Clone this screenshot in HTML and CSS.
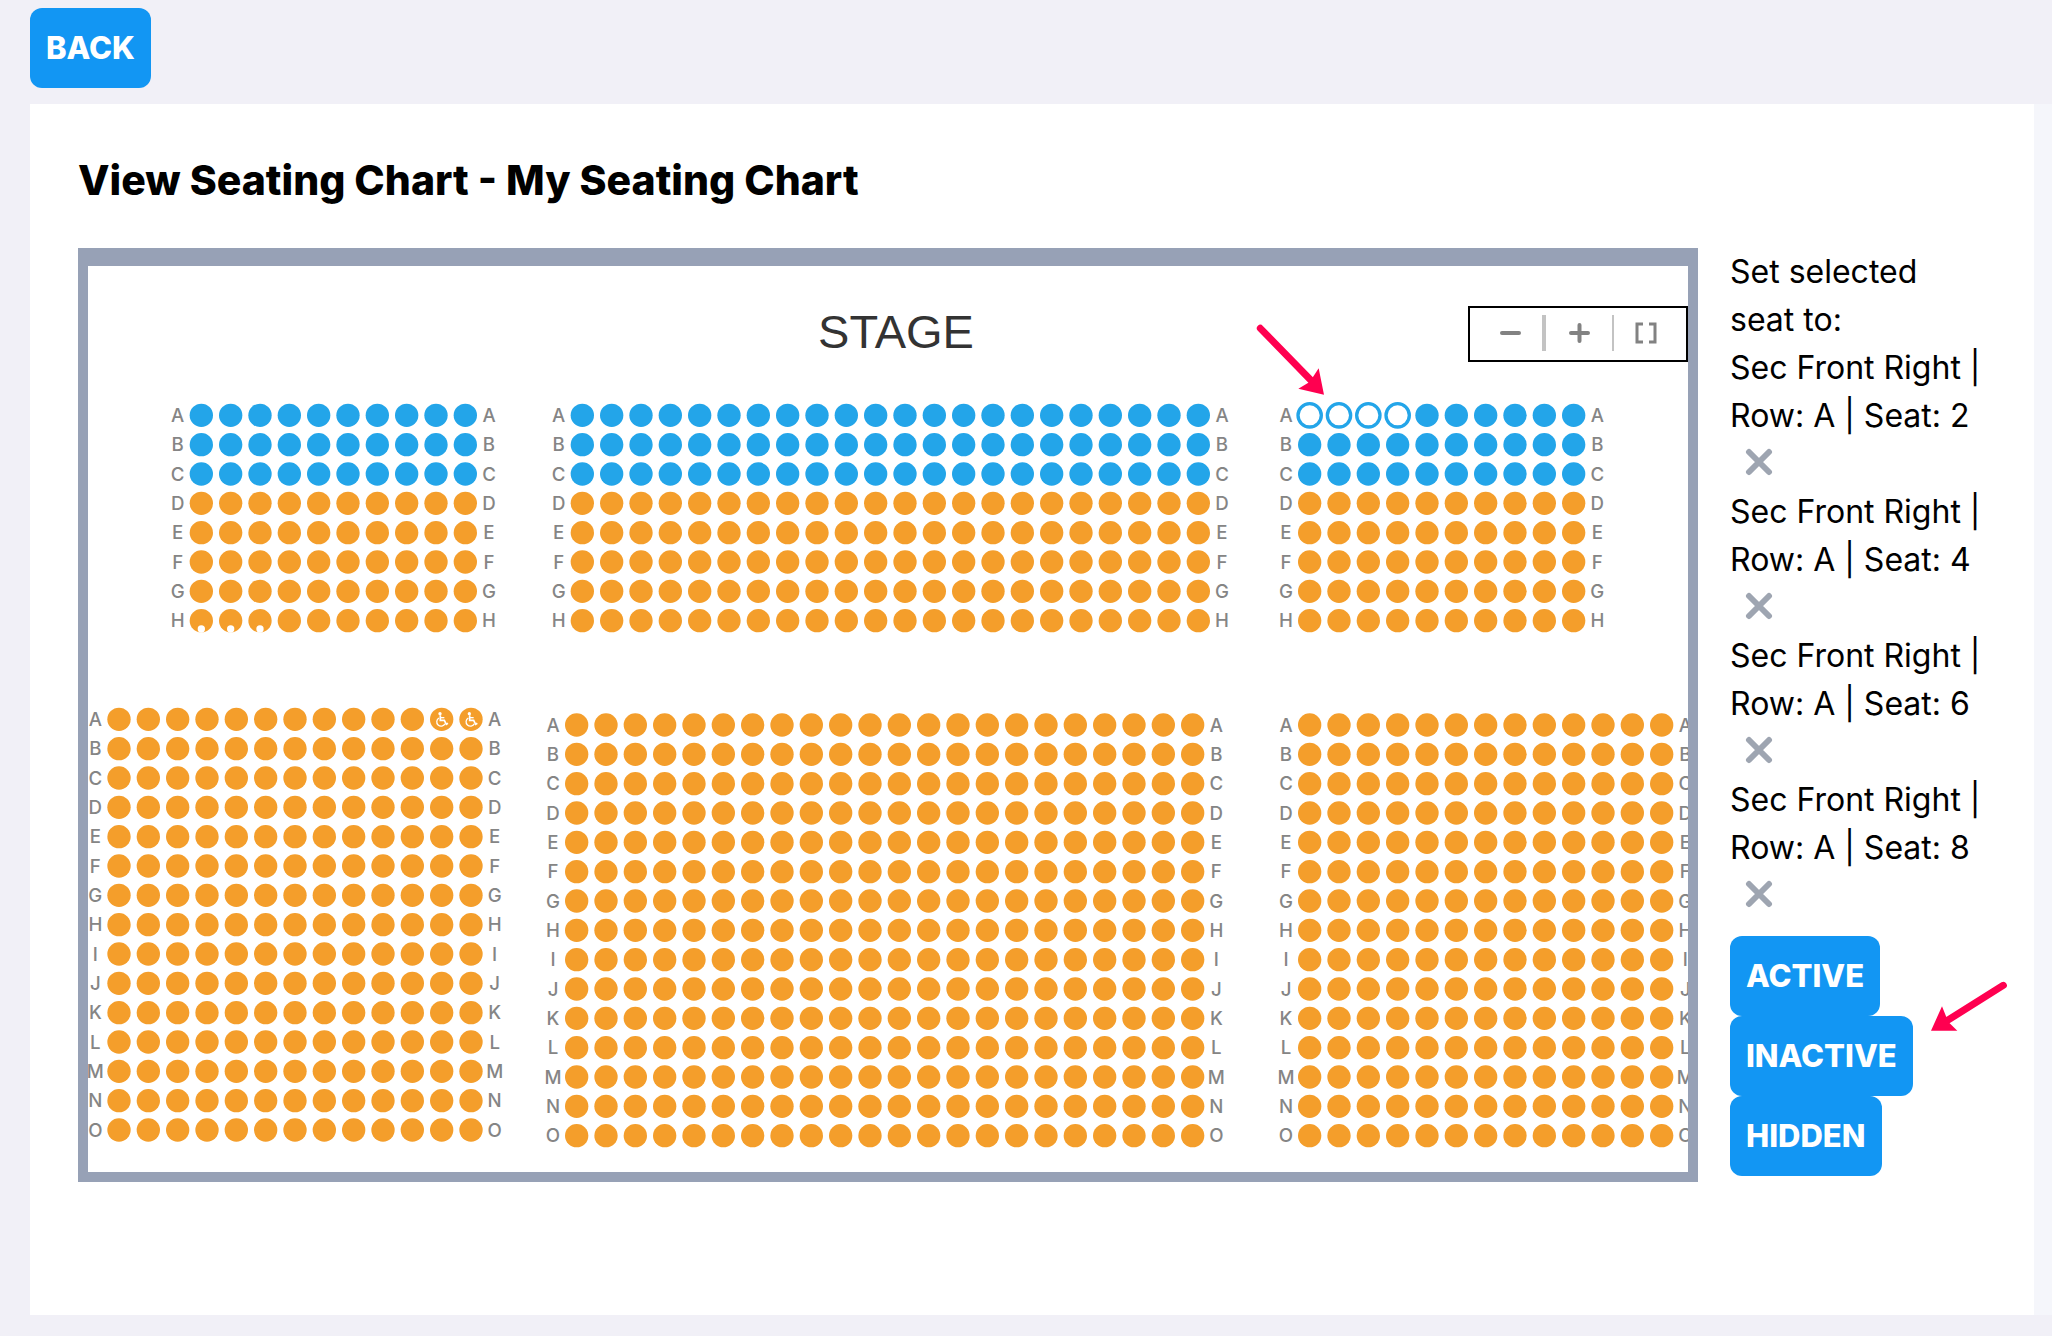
FILE: index.html
```html
<!DOCTYPE html>
<html lang="en">
<head>
	<meta charset="utf-8">
	<title>View Seating Chart</title>
	<link rel="stylesheet" href="styles.css">
</head>
<body>
	<header class="topbar">
		<button type="button" class="btn">BACK</button>
	</header>
	<main class="page">
		<div class="panel">
			<h1 class="title">View Seating Chart - My Seating Chart</h1>
			<div class="content">
				<div class="chart">
					<svg class="seatmap" id="seatmap" viewBox="0 0 4800 2718" role="img" aria-label="Seating chart">
						<defs>
							<g id="wheelchair" fill="none" stroke="#fff" stroke-width="5">
								<circle cx="-5" cy="-17" r="5" fill="#fff" stroke="none"/>
								<path d="M-4 -12V3H8L14 15L19 12"/>
								<path d="M-4 -5H8" stroke-width="4"/>
								<path d="M-8 -4A13 13 0 1 0 10 13" stroke-width="4"/>
							</g>
						</defs>
						<text class="stage" x="2424" y="247">STAGE</text>
						<g id="sections"></g>
						<g class="pointer" transform="translate(3456 72)">
							<path class="shaft" d="M61 115L212 270"/>
							<path d="M252 314L236 235L217 264L205 278L175 296Z"/>
						</g>
					</svg>
					<div class="tools">
						<button type="button" aria-label="Zoom out">
							<svg width="24" height="24" viewBox="0 0 24 24"><path d="M4 12H21"/></svg>
						</button>
						<span class="bar wide"></span>
						<button type="button" aria-label="Zoom in">
							<svg width="24" height="24" viewBox="0 0 24 24"><path d="M4 12H21M12.500 4V20"/></svg>
						</button>
						<span class="bar"></span>
						<button type="button" aria-label="Reset zoom">
							<svg width="24" height="24" viewBox="0 0 24 24"><path class="thin" d="M9 3H3V21H9M15 3H21V21H15"/></svg>
						</button>
					</div>
				</div>
				<aside class="side">
					<p>Set selected<br>seat to:</p>
					<ul class="picked">
						<li>Sec Front Right |<br>Row: A | Seat: 2
							<button type="button" class="remove" aria-label="Remove seat 2"><svg width="28" height="28" viewBox="0 0 28 28"><path d="M4 4L24 24M24 4L4 24"/></svg></button>
						</li>
						<li>Sec Front Right |<br>Row: A | Seat: 4
							<button type="button" class="remove" aria-label="Remove seat 4"><svg width="28" height="28" viewBox="0 0 28 28"><path d="M4 4L24 24M24 4L4 24"/></svg></button>
						</li>
						<li>Sec Front Right |<br>Row: A | Seat: 6
							<button type="button" class="remove" aria-label="Remove seat 6"><svg width="28" height="28" viewBox="0 0 28 28"><path d="M4 4L24 24M24 4L4 24"/></svg></button>
						</li>
						<li>Sec Front Right |<br>Row: A | Seat: 8
							<button type="button" class="remove" aria-label="Remove seat 8"><svg width="28" height="28" viewBox="0 0 28 28"><path d="M4 4L24 24M24 4L4 24"/></svg></button>
						</li>
					</ul>
					<div class="actions">
						<button type="button" class="btn">ACTIVE</button>
						<button type="button" class="btn">INACTIVE</button>
						<button type="button" class="btn">HIDDEN</button>
						<svg class="pointer note" width="76" height="50" viewBox="0 0 228 150">
							<path class="shaft" d="M217 13L50 118"/>
							<path d="M0 149L33 76L45 106L56 127L79 149Z"/>
						</svg>
					</div>
				</aside>
			</div>
		</div>
	</main>
	<script src="seats.js"></script>
</body>
</html>
```
FILE: styles.css
```css
*{box-sizing:border-box;}
body{margin:0;background:#f1f0f7;color:#000;font-family:Inter,"Open Sans",sans-serif;font-size:32px;line-height:48px;}
p,ul,h1{margin:0;padding:0;}
button{font-family:inherit;border:0;cursor:pointer;}
.topbar{padding:8px 30px 16px;line-height:0;}
.btn{
	height:80px;padding:0 16px;
	border-radius:12px;background:#1296f3;
	color:#fff;font-size:31px;font-weight:800;line-height:48px;
}
.page{margin:0 0 21px 30px;padding-right:18px;background:#f5f6fb;}
.panel{padding:48px 48px 133px;background:#fff;}
.title{margin-bottom:40px;font-size:41px;font-weight:800;line-height:56px;}
.content{display:flex;align-items:flex-start;gap:32px;}

/* chart */
.chart{position:relative;flex:1;min-width:0;border:10px solid #97a1b6;border-top-width:18px;}
.seatmap{display:block;width:100%;height:auto;}
.stage{font-family:"Liberation Sans",Arial,sans-serif;font-size:141px;fill:#333;text-anchor:middle;}
.label{font-size:56px;font-weight:500;fill:#858585;text-anchor:middle;}
.seat{fill:#f49e2b;}
.seat.blue{fill:#23a5e9;}
.seat.selected{fill:#fff;stroke:#23a5e9;stroke-width:10px;}
.pointer{fill:#ff0050;}
.pointer .shaft{fill:none;stroke:#ff0050;stroke-width:21px;stroke-linecap:round;}
.tools{
	position:absolute;top:40px;right:0;
	display:flex;align-items:center;
	width:220px;height:56px;padding:0 7px 2px;
	border:2px solid #000;background:#fff;
}
.tools button{display:flex;flex:1;justify-content:center;padding:0;background:none;}
.tools path{fill:none;stroke:#828282;stroke-width:4px;stroke-linecap:round;}
.tools .thin{stroke-width:3px;stroke-linecap:butt;}
.bar{width:2px;height:36px;background:#c3c3c3;}
.bar.wide{width:4px;}

/* selected seats */
.side{width:256px;white-space:nowrap;}
.picked{list-style:none;}
.remove{display:flex;align-items:center;height:48px;padding:0 0 4px 15px;background:none;}
.remove path{stroke:#9ea5b1;stroke-width:6px;stroke-linecap:round;}
.actions{position:relative;display:flex;flex-direction:column;align-items:flex-start;margin-top:16px;}
.note{position:absolute;top:45px;left:201px;}
```
FILE: seats.js
```js
// x, y is the centre of the first seat; seats are 88 units apart
var PITCH = 88;
var sections = [
	{x: 340, y: 448, cols: 10, rows: 8, blue: 3, marked: 3},
	{x: 1483, y: 448, cols: 22, rows: 8, blue: 3},
	{x: 3665, y: 448, cols: 10, rows: 8, blue: 3, selected: 4},
	{x: 93, y: 1360, cols: 13, rows: 15, wheelchair: 2},
	{x: 1466, y: 1377, cols: 22, rows: 15},
	{x: 3665, y: 1377, cols: 13, rows: 15}
];

function label(x, y, text) {
	return '<text class="label" x="' + x + '" y="' + (y + 20) + '">' + text + '</text>';
}

function drawSection(s) {
	var out = '';
	for (var r = 0; r < s.rows; r++) {
		var y = s.y + r * PITCH;
		var name = String.fromCharCode(65 + r);
		out += label(s.x - 71, y, name);
		for (var c = 0; c < s.cols; c++) {
			var x = s.x + c * PITCH;
			var picked = r === 0 && c < s.selected;
			var cls = 'seat' + (r < s.blue ? ' blue' : '') + (picked ? ' selected' : '');
			out += '<circle class="' + cls + '" cx="' + x + '" cy="' + y + '" r="35"/>';
			if (r === s.rows - 1 && c < s.marked) {
				out += '<circle cx="' + x + '" cy="' + (y + 25) + '" r="11" fill="#fff"/>';
			}
			if (r === 0 && c >= s.cols - s.wheelchair) {
				out += '<use href="#wheelchair" x="' + x + '" y="' + y + '"/>';
			}
		}
		out += label(s.x + (s.cols - 1) * PITCH + 71, y, name);
	}
	return out;
}

document.getElementById('sections').innerHTML = sections.map(drawSection).join('');
```
